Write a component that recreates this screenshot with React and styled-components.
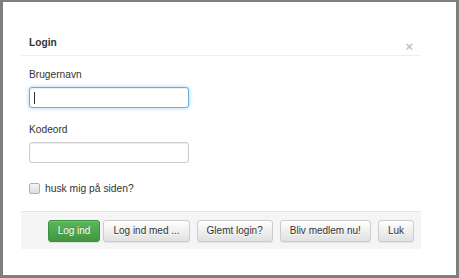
import React from "react";
import styled, { createGlobalStyle } from "styled-components";

const GlobalStyle = createGlobalStyle`
  html, body {
    margin: 0;
    padding: 0;
    background: #7f7f7f;
  }
  body {
    font-family: "Liberation Sans", Arial, sans-serif;
    font-size: 10px;
    color: #333;
  }
`;

const Frame = styled.div`
  width: 459px;
  height: 278px;
  box-sizing: border-box;
  padding: 2px 3px 3px 3px;
`;

const Page = styled.div`
  height: 100%;
  background: #fff;
  padding: 27px 0 0 18px;
  box-sizing: border-box;
`;

const Modal = styled.div`
  width: 400px;
  display: flex;
  flex-direction: column;
`;

const Header = styled.div`
  display: flex;
  align-items: center;
  justify-content: space-between;
  height: 27px;
  padding: 1px 8px 0 8px;
  box-sizing: border-box;
  border-bottom: 1px solid #eeeeee;
`;

const Title = styled.h4`
  margin: 0;
  font-size: 10.2px;
  font-weight: bold;
  color: #333;
`;

const Close = styled.span`
  font-size: 13px;
  font-weight: bold;
  color: #c4c4c4;
  line-height: 1;
  margin-top: 7px;
`;

const Body = styled.div`
  padding: 13px 8px 0 8px;
  height: 155px;
  box-sizing: border-box;
`;

const Group = styled.div`
  margin-bottom: 16px;
`;

const Label = styled.label`
  display: block;
  font-size: 10.2px;
  line-height: 12px;
  color: #333;
  margin-bottom: 6px;
`;

const Input = styled.div`
  width: 160px;
  height: 21px;
  box-sizing: border-box;
  border: 1px solid ${p => (p.$focus ? "#66afe9" : "#cccccc")};
  border-radius: 3px;
  background: #fff;
  box-shadow: ${p =>
    p.$focus
      ? "inset 0 1px 1px rgba(0,0,0,.075), 0 0 4px rgba(102,175,233,.6)"
      : "inset 0 1px 1px rgba(0,0,0,.075)"};
  display: flex;
  align-items: center;
  padding-left: 4px;
`;

const Caret = styled.span`
  width: 1px;
  height: 12px;
  background: #333;
`;

const Check = styled.label`
  display: flex;
  align-items: center;
  gap: 5px;
  margin-top: 20px;
  font-size: 10.3px;
  color: #333;
`;

const Box = styled.span`
  width: 9px;
  height: 9px;
  border: 1px solid #b0b0b0;
  border-radius: 2px;
  background: linear-gradient(#f4f4f4, #dedede);
`;

const Footer = styled.div`
  height: 38px;
  box-sizing: border-box;
  border-top: 1px solid #e5e5e5;
  background: #f5f5f5;
  display: flex;
  align-items: center;
  justify-content: flex-end;
  padding: 0 7px 0 0;
  gap: 7px;
`;

const Pair = styled.div`
  display: flex;
  gap: 3px;
`;

const Button = styled.button`
  flex-shrink: 0;
  white-space: nowrap;
  height: 22px;
  box-sizing: border-box;
  padding: 0 9px;
  font-family: inherit;
  font-size: 10px;
  border-radius: 3px;
  border: 1px solid ${p => (p.$primary ? "#3e8f3e" : "#cccccc")};
  color: ${p => (p.$primary ? "#fff" : "#333")};
  background: ${p =>
    p.$primary
      ? "linear-gradient(#5cb85c, #419641)"
      : "linear-gradient(#ffffff, #e0e0e0)"};
  box-shadow: inset 0 1px 0 rgba(255,255,255,.15), 0 1px 1px rgba(0,0,0,.075);
  text-shadow: ${p => (p.$primary ? "0 -1px 0 rgba(0,0,0,.2)" : "0 1px 0 #fff")};
  cursor: pointer;
`;

export default function App() {
  return (
    <>
      <GlobalStyle />
      <Frame>
        <Page>
          <Modal>
            <Header>
              <Title>Login</Title>
              <Close>×</Close>
            </Header>
            <Body>
              <Group>
                <Label>Brugernavn</Label>
                <Input $focus>
                  <Caret />
                </Input>
              </Group>
              <Group>
                <Label>Kodeord</Label>
                <Input />
              </Group>
              <Check>
                <Box />
                husk mig på siden?
              </Check>
            </Body>
            <Footer>
              <Pair>
                <Button $primary>Log ind</Button>
                <Button>Log ind med ...</Button>
              </Pair>
              <Button>Glemt login?</Button>
              <Button>Bliv medlem nu!</Button>
              <Button>Luk</Button>
            </Footer>
          </Modal>
        </Page>
      </Frame>
    </>
  );
}
